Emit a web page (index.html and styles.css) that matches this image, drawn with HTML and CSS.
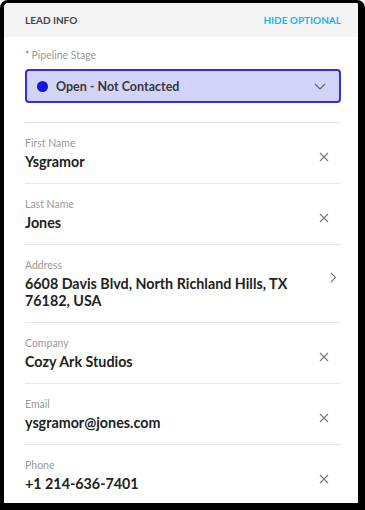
FILE: index.html
```html
<!DOCTYPE html>
<html lang="en">
<head>
    <meta charset="UTF-8">
    <meta name="viewport" content="width=device-width, initial-scale=1.0">
    <title>Lead Info</title>
    <link rel="stylesheet" href="styles.css">
</head>
<body>
    <div class="phone">
        <div class="section-header">
            <span class="section-title">Lead Info</span>
            <a class="toggle-link" href="#">Hide Optional</a>
        </div>

        <div class="form">
            <div class="stage-field">
                <div class="field-label"><span class="required">*</span>Pipeline Stage</div>
                <div class="stage-select">
                    <span class="stage-dot"></span>
                    <span class="stage-name">Open - Not Contacted</span>
                    <svg class="chevron-down" width="12" height="7" viewBox="0 0 12 7">
                        <path d="M1 1l5 5 5-5" fill="none" stroke="#666" stroke-width="1.1"/>
                    </svg>
                </div>
            </div>

            <div class="field">
                <div class="field-body">
                    <div class="field-label">First Name</div>
                    <div class="field-value">Ysgramor</div>
                </div>
                <svg class="clear-icon" width="10" height="10" viewBox="0 0 10 10">
                    <path d="M1 1l8 8M9 1l-8 8" stroke="#777" stroke-width="1.1"/>
                </svg>
            </div>

            <div class="field">
                <div class="field-body">
                    <div class="field-label">Last Name</div>
                    <div class="field-value">Jones</div>
                </div>
                <svg class="clear-icon" width="10" height="10" viewBox="0 0 10 10">
                    <path d="M1 1l8 8M9 1l-8 8" stroke="#777" stroke-width="1.1"/>
                </svg>
            </div>

            <div class="field">
                <div class="field-body">
                    <div class="field-label">Address</div>
                    <div class="field-value">6608 Davis Blvd, North Richland Hills, TX 76182, USA</div>
                </div>
                <svg class="chevron-right" width="7" height="11" viewBox="0 0 7 11">
                    <path d="M1 1l4.5 4.5L1 10" fill="none" stroke="#777" stroke-width="1.1"/>
                </svg>
            </div>

            <div class="field">
                <div class="field-body">
                    <div class="field-label">Company</div>
                    <div class="field-value">Cozy Ark Studios</div>
                </div>
                <svg class="clear-icon" width="10" height="10" viewBox="0 0 10 10">
                    <path d="M1 1l8 8M9 1l-8 8" stroke="#777" stroke-width="1.1"/>
                </svg>
            </div>

            <div class="field">
                <div class="field-body">
                    <div class="field-label">Email</div>
                    <div class="field-value">ysgramor@jones.com</div>
                </div>
                <svg class="clear-icon" width="10" height="10" viewBox="0 0 10 10">
                    <path d="M1 1l8 8M9 1l-8 8" stroke="#777" stroke-width="1.1"/>
                </svg>
            </div>

            <div class="field">
                <div class="field-body">
                    <div class="field-label">Phone</div>
                    <div class="field-value">+1 214-636-7401</div>
                </div>
                <svg class="clear-icon" width="10" height="10" viewBox="0 0 10 10">
                    <path d="M1 1l8 8M9 1l-8 8" stroke="#777" stroke-width="1.1"/>
                </svg>
            </div>
        </div>
    </div>
</body>
</html>
```

FILE: styles.css
```css
* {
    margin: 0;
    padding: 0;
    box-sizing: border-box;
}

body {
    font-family: 'Lato', 'Liberation Sans', sans-serif;
    background: #fff;
    color: #222;
}

.phone {
    width: 365px;
    height: 510px;
    border-style: solid;
    border-color: #000;
    border-width: 3px 7px 7px 4px;
    border-radius: 8px 8px 0 0;
    overflow: hidden;
    background: #fff;
}

.section-header {
    height: 34px;
    background: #f4f4f4;
    display: flex;
    justify-content: space-between;
    align-items: center;
    padding: 0 17px 0 21px;
    text-transform: uppercase;
    font-size: 10px;
    font-weight: bold;
}

.section-title {
    color: #444;
}

.toggle-link {
    color: #1cb6ea;
    text-decoration: none;
}

.form {
    padding: 0 17px 0 21px;
}

.field-label {
    font-size: 10.5px;
    line-height: 14px;
    color: #999;
}

.required {
    color: #e8587a;
    margin-right: 2px;
}

.stage-field {
    padding: 11px 0 19px;
    border-bottom: 1px solid #e2e2ea;
}

.stage-select {
    margin-top: 7px;
    height: 34px;
    background: #d3d3f7;
    border: 2px solid #3030ea;
    border-radius: 4px;
    display: flex;
    align-items: center;
    padding: 0 13px 0 10px;
}

.stage-dot {
    width: 11px;
    height: 11px;
    border-radius: 50%;
    background: #1515e0;
    margin-right: 8px;
}

.stage-name {
    flex: 1;
    font-size: 12.5px;
    font-weight: bold;
    color: #383838;
}

.field {
    display: flex;
    align-items: center;
    padding: 13px 0;
    border-bottom: 1px solid #e6e6e6;
}

.field-body {
    flex: 1;
}

.field .field-label {
    margin-bottom: 3px;
}

.field-value {
    font-size: 14.3px;
    font-weight: bold;
    line-height: 17px;
    color: #222;
    padding-right: 40px;
}

.clear-icon {
    margin: 8px 12px 0 0;
}

.chevron-right {
    margin: 0 4px 12px 0;
}
```
